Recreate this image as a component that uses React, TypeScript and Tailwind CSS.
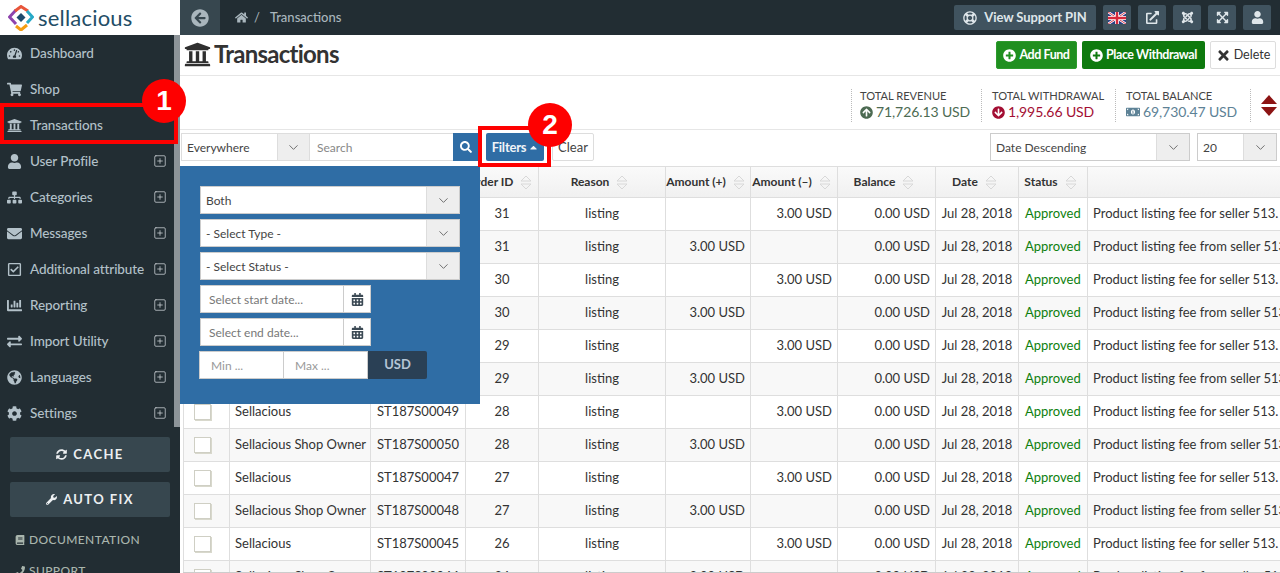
import type { ReactNode } from "react";
import { ChevronDown, SquarePlus } from "lucide-react";
import {
  FaArrowCircleDown,
  FaArrowCircleLeft,
  FaArrowCircleUp,
  FaBook,
  FaCalendarAlt,
  FaCaretUp,
  FaChartBar,
  FaCog,
  FaEnvelope,
  FaExchangeAlt,
  FaExpandArrowsAlt,
  FaExternalLinkAlt,
  FaGlobeAmericas,
  FaHome,
  FaJoomla,
  FaMoneyBillAlt,
  FaPhone,
  FaPlusCircle,
  FaRegCheckSquare,
  FaRegLifeRing,
  FaSearch,
  FaShoppingCart,
  FaSitemap,
  FaSyncAlt,
  FaTachometerAlt,
  FaTimes,
  FaUniversity,
  FaUser,
  FaWrench,
} from "react-icons/fa";

const navItems = [
  { label: "Dashboard", icon: <FaTachometerAlt />, plus: false },
  { label: "Shop", icon: <FaShoppingCart />, plus: false },
  { label: "Transactions", icon: <FaUniversity />, plus: false },
  { label: "User Profile", icon: <FaUser />, plus: true },
  { label: "Categories", icon: <FaSitemap />, plus: true },
  { label: "Messages", icon: <FaEnvelope />, plus: true },
  { label: "Additional attribute", icon: <FaRegCheckSquare />, plus: true },
  { label: "Reporting", icon: <FaChartBar />, plus: true },
  { label: "Import Utility", icon: <FaExchangeAlt />, plus: true },
  { label: "Languages", icon: <FaGlobeAmericas />, plus: true },
  { label: "Settings", icon: <FaCog />, plus: true },
];

const rows = [
  ["ST187S00061", "31", false],
  ["ST187S00062", "31", true],
  ["ST187S00059", "30", false],
  ["ST187S00060", "30", true],
  ["ST187S00057", "29", false],
  ["ST187S00058", "29", true],
  ["ST187S00049", "28", false],
  ["ST187S00050", "28", true],
  ["ST187S00047", "27", false],
  ["ST187S00048", "27", true],
  ["ST187S00045", "26", false],
  ["ST187S00044", "24", true],
] as const;

const columns = [
  { label: "", width: "w-[46px]" },
  { label: "Seller", width: "w-[141px]" },
  { label: "Txn ID", width: "w-[95px]" },
  { label: "Order ID", width: "w-[73px]" },
  { label: "Reason", width: "w-[127px]" },
  { label: "Amount (+)", width: "w-[85px]" },
  { label: "Amount (–)", width: "w-[87px]" },
  { label: "Balance", width: "w-[98px]" },
  { label: "Date", width: "w-[83px]" },
  { label: "Status", width: "w-[69px]" },
  { label: "", width: "w-[260px]" },
];

function Logo() {
  return (
    <div className="flex h-[35px] w-[180px] shrink-0 items-center bg-white pl-[8px]">
      <svg width="26" height="26" viewBox="0 0 26 26" fill="none" strokeWidth="3">
        <path d="M8 5 L1.5 12 L8 19" stroke="#8e44ad" />
        <path d="M7 6 L13 1.5 L20 6" stroke="#e8553a" />
        <path d="M19 6 L24.5 12 L19 18" stroke="#27a9c7" />
        <path d="M8 21 L13 25 L19 20" stroke="#f39c12" />
        <path d="M13 8 L17.500 12.500 L13 17 L8.500 12.500 Z" fill="#1d4a6d" stroke="none" />
      </svg>
      <span className="ml-[4px] text-[22px] leading-none font-normal tracking-[0.2px] text-[#234d66]">sellacious</span>
    </div>
  );
}

function Sidebar() {
  return (
    <aside className="relative flex w-[180px] shrink-0 flex-col overflow-hidden bg-[#222d33]">
      <Logo />
      <div className="absolute top-[35px] right-0 h-[392px] w-[6px] bg-[#8d9499]" />
      <nav className="flex flex-col">
        {navItems.map((item) => (
          <div key={item.label} className="flex h-[36px] items-center pr-[13px] pl-[7px] text-[#b3c1c9]">
            <span className="flex w-[23px] justify-start text-[15px]">{item.icon}</span>
            <span className="flex-1 text-[13.500px] font-medium tracking-[-0.1px] whitespace-nowrap">{item.label}</span>
            {item.plus && <SquarePlus size={14} strokeWidth={1.25} className="text-[#d5dbdf]" />}
          </div>
        ))}
      </nav>
      <div className="mt-[6px] flex flex-col gap-[10px] px-[10px]">
        <SideButton icon={<FaSyncAlt />} label="CACHE" />
        <SideButton icon={<FaWrench />} label="AUTO FIX" />
      </div>
      <div className="mt-[14px] flex items-center gap-[4px] pl-[15px] text-[12px] font-medium tracking-[0.4px] text-[#a9b5ad]">
        <FaBook className="text-[10px]" />
        DOCUMENTATION
      </div>
      <div className="mt-[13px] flex items-center gap-[4px] pl-[15px] text-[12px] font-medium tracking-[0.4px] text-[#a9b5ad]">
        <FaPhone className="text-[10px]" />
        SUPPORT
      </div>
    </aside>
  );
}

function SideButton({ icon, label }: { icon: ReactNode; label: string }) {
  return (
    <div className="flex h-[35px] items-center justify-center gap-[6px] rounded-[2px] bg-[#37474f] text-[13px] font-bold tracking-[1.4px] text-[#eceff1]">
      <span className="text-[11px]">{icon}</span>
      {label}
    </div>
  );
}

function Flag() {
  return (
    <svg width="18" height="12" viewBox="0 0 60 40">
      <rect width="60" height="40" fill="#2b3f86" />
      <path d="M0 0 L60 40 M60 0 L0 40" stroke="#fff" strokeWidth="8" />
      <path d="M0 0 L60 40 M60 0 L0 40" stroke="#d6283c" strokeWidth="3" />
      <path d="M30 0 V40 M0 20 H60" stroke="#fff" strokeWidth="13" />
      <path d="M30 0 V40 M0 20 H60" stroke="#d6283c" strokeWidth="8" />
    </svg>
  );
}

function TopButton({ children }: { children: ReactNode }) {
  return (
    <div className="flex h-[25px] w-[28px] items-center justify-center rounded-[2px] bg-[#40535f] text-[13px] text-[#dfe6ea]">
      {children}
    </div>
  );
}

function TopBar() {
  return (
    <header className="flex h-[35px] shrink-0 items-center bg-[#222d33]">
      <div className="flex h-full w-[40px] items-center justify-center bg-[#37474f] text-[18px] text-[#a9b6bd]">
        <FaArrowCircleLeft />
      </div>
      <FaHome className="ml-[15px] text-[13px] text-[#a9b6bd]" />
      <span className="ml-[6px] text-[13px] text-[#a9b6bd]">/</span>
      <span className="ml-[10px] text-[13px] font-medium text-[#a9b6bd]">Transactions</span>
      <div className="ml-auto flex items-center gap-[7px] pr-[9px]">
        <div className="flex h-[25px] w-[142px] items-center justify-center gap-[7px] rounded-[2px] bg-[#40535f] text-[13px] font-bold tracking-[-0.1px] text-[#dfe6ea]">
          <FaRegLifeRing className="text-[14px]" />
          View Support PIN
        </div>
        <TopButton>
          <Flag />
        </TopButton>
        <TopButton>
          <FaExternalLinkAlt />
        </TopButton>
        <TopButton>
          <FaJoomla />
        </TopButton>
        <TopButton>
          <FaExpandArrowsAlt />
        </TopButton>
        <TopButton>
          <FaUser />
        </TopButton>
      </div>
    </header>
  );
}

function TitleRow() {
  return (
    <div className="flex h-[41px] shrink-0 items-center border-b border-[#e6e6e6] px-[4px]">
      <FaUniversity className="-mt-[2px] text-[27px] text-[#2f2f2f]" />
      <h1 className="-mt-[2px] ml-[3px] text-[24px] font-bold tracking-[-0.75px] text-[#333]">Transactions</h1>
      <div className="ml-auto flex items-center gap-[5px]">
        <div className="flex h-[28px] w-[81px] items-center justify-center gap-[3px] rounded-[2px] border border-[#2d9b2d] bg-[#1f8f1f] pt-[1px] text-[12.500px] font-bold tracking-[-0.45px] text-white">
          <FaPlusCircle className="text-[13px]" />
          Add Fund
        </div>
        <div className="flex h-[28px] w-[123px] items-center justify-center gap-[3px] rounded-[2px] bg-[#0e7a0e] pt-[1px] text-[12.500px] font-bold tracking-[-0.45px] text-white">
          <FaPlusCircle className="text-[13px]" />
          Place Withdrawal
        </div>
        <div className="flex h-[28px] w-[66px] items-center justify-center gap-[3px] rounded-[2px] border border-[#ddd] bg-white pt-[1px] text-[12.500px] text-[#333]">
          <FaTimes className="text-[15px]" />
          Delete
        </div>
      </div>
    </div>
  );
}

function Stat({ label, value, icon, color, width, inset = "pl-[10px]" }: { label: string; value: string; icon: ReactNode; color: string; width: string; inset?: string }) {
  return (
    <div className={`${width} ${inset} h-[33px] border-l border-dotted border-[#bbb]`}>
      <div className="text-[11.100px] leading-[14px] text-[#444]">{label}</div>
      <div className={`flex items-center gap-[3px] text-[14px] leading-[18px] tracking-[-0.1px] ${color}`}>
        {icon}
        {value}
      </div>
    </div>
  );
}

function StatsRow() {
  return (
    <div className="flex h-[54px] shrink-0 items-center justify-end border-b border-[#e6e6e6] pt-[6px] pr-[3px]">
      <Stat width="w-[130px]" inset="pl-[8px]" label="TOTAL REVENUE" value="71,726.13 USD" color="text-[#4d6b53]" icon={<FaArrowCircleUp className="text-[13px]" />} />
      <Stat width="w-[134px]" label="TOTAL WITHDRAWAL" value="1,995.66 USD" color="text-[#a30e33]" icon={<FaArrowCircleDown className="text-[13px]" />} />
      <Stat width="w-[135px]" label="TOTAL BALANCE" value="69,730.47 USD" color="text-[#5d8296]" icon={<FaMoneyBillAlt className="text-[14px]" />} />
      <div className="flex h-[33px] w-[27px] items-center justify-end border-l border-dotted border-[#bbb]">
        <svg width="16" height="21" viewBox="0 0 16 21" fill="#8c1414">
          <path d="M8 0 L16 9 H0 Z" />
          <path d="M0 12 H16 L8 21 Z" />
        </svg>
      </div>
    </div>
  );
}

function Select({ text, width, arrow = "w-[33px]", border = "border-[#ddd]" }: { text: string; width: string; arrow?: string; border?: string }) {
  return (
    <div className={`flex h-[28px] shrink-0 items-stretch border bg-white text-[12px] text-[#444] ${width} ${border}`}>
      <span className="flex flex-1 items-center overflow-hidden pt-[1px] pl-[5px] whitespace-nowrap">{text}</span>
      <span className={`flex items-center justify-center border-l border-[#ddd] bg-[#eee] text-[#666] ${arrow}`}>
        <ChevronDown size={15} strokeWidth={1.5} />
      </span>
    </div>
  );
}

function Toolbar() {
  return (
    <div className="flex h-[36px] shrink-0 items-start pt-[3px] pl-[1px]">
      <Select text="Everywhere" width="w-[129px]" arrow="w-[32px]" />
      <div className="flex h-[28px] w-[143px] items-center border-y border-[#ddd] bg-white pt-[1px] pl-[7px] text-[12px] text-[#888]">Search</div>
      <div className="flex h-[28px] w-[25px] items-center justify-center bg-[#2f6da5] text-[12px] text-white">
        <FaSearch />
      </div>
      <div className="ml-[8px] flex h-[28px] w-[58px] items-center justify-center gap-[2px] rounded-[2px] bg-[#2f6da5] pt-[1px] pl-[1px] text-[13px] font-bold tracking-[-0.2px] text-[#f0f4f8]">
        Filters
        <FaCaretUp className="text-[11px]" />
      </div>
      <div className="ml-[8px] flex h-[28px] w-[42px] items-center justify-center rounded-[2px] border border-[#ddd] bg-white pt-[1px] text-[13px] text-[#444]">Clear</div>
      <div className="ml-auto flex gap-[7px] pr-[3px]">
        <Select text="Date Descending" width="w-[200px]" border="border-[#ccc]" />
        <Select text="20" width="w-[80px]" border="border-[#ccc]" />
      </div>
    </div>
  );
}

function SortArrows() {
  return (
    <svg width="12" height="15" viewBox="0 0 12 15" fill="none" stroke="#d8d8d8" className="mr-[5px] ml-[7px] inline-block align-middle">
      <path d="M1 6 L6 1 L11 6 Z" />
      <path d="M1 9 L6 14 L11 9 Z" />
    </svg>
  );
}

function TransactionsTable() {
  return (
    <div className="ml-[3px] min-h-0 flex-1 overflow-hidden border-b border-[#ccc]">
      <table className="w-[1164px] table-fixed border-collapse text-[13px] text-[#333]">
        <colgroup>
          {columns.map((col, i) => (
            <col key={i} className={col.width} />
          ))}
        </colgroup>
        <thead>
          <tr className="h-[31px] bg-gradient-to-b from-[#fafafa] to-[#f0f0f0]">
            {columns.map((col, i) => (
              <th key={i} className="border border-[#dedede] px-0 text-center text-[12px] font-bold whitespace-nowrap text-[#333]">
                {col.label}
                {col.label && <SortArrows />}
              </th>
            ))}
          </tr>
        </thead>
        <tbody>
          {rows.map(([txn, order, fromSeller]) => (
            <tr key={txn} className={`h-[33px] ${fromSeller ? "bg-[#f8f8f8]" : "bg-white"}`}>
              <td className="border border-[#dedede] pl-[10px]">
                <div className="h-[16px] w-[17px] border border-[#cfcfc4] bg-white shadow-[1px_1px_0_#d8d8cc]" />
              </td>
              <td className="border border-[#dedede] pl-[5px] whitespace-nowrap">
                {fromSeller ? "Sellacious Shop Owner" : "Sellacious"}
              </td>
              <td className="border border-[#dedede] text-center whitespace-nowrap">{txn}</td>
              <td className="border border-[#dedede] text-center">{order}</td>
              <td className="border border-[#dedede] text-center">listing</td>
              <td className="border border-[#dedede] pr-[5px] text-right whitespace-nowrap">{fromSeller ? "3.00 USD" : ""}</td>
              <td className="border border-[#dedede] pr-[5px] text-right whitespace-nowrap">{fromSeller ? "" : "3.00 USD"}</td>
              <td className="border border-[#dedede] pr-[5px] text-right whitespace-nowrap">0.00 USD</td>
              <td className="border border-[#dedede] text-center whitespace-nowrap">Jul 28, 2018</td>
              <td className="border border-[#dedede] pl-[6px] whitespace-nowrap text-[#0e7f0e]">Approved</td>
              <td className="overflow-hidden border border-[#dedede] pl-[5px] whitespace-nowrap">
                {fromSeller ? "Product listing fee from seller 513." : "Product listing fee for seller 513."}
              </td>
            </tr>
          ))}
        </tbody>
      </table>
    </div>
  );
}

function DateInput({ placeholder }: { placeholder: string }) {
  return (
    <div className="flex h-[28px] w-[171px] items-stretch border border-[#ccc] bg-white text-[12px] text-[#777]">
      <span className="flex flex-1 items-center pt-[1px] pl-[8px]">{placeholder}</span>
      <span className="flex w-[27px] items-center justify-center border-l border-[#ccc] text-[13px] text-[#3c4a55]">
        <FaCalendarAlt />
      </span>
    </div>
  );
}

function FilterPanel() {
  return (
    <div className="absolute top-[166px] left-0 flex h-[238px] w-[300px] flex-col gap-[5px] bg-[#2f6da5] pt-[20px] pl-[20px]">
      <Select text="Both" width="w-[260px]" border="border-[#ccc]" />
      <Select text="- Select Type -" width="w-[260px]" border="border-[#ccc]" />
      <Select text="- Select Status -" width="w-[260px]" border="border-[#ccc]" />
      <DateInput placeholder="Select start date..." />
      <DateInput placeholder="Select end date..." />
      <div className="-ml-[1px] flex h-[28px] text-[12px] text-[#999]">
        <span className="flex w-[85px] items-center border border-[#ccc] bg-white pt-[1px] pl-[11px]">Min ...</span>
        <span className="flex w-[84px] items-center border-y border-r border-[#ccc] bg-white pt-[1px] pl-[11px]">Max ...</span>
        <span className="flex w-[59px] items-center justify-center rounded-r-[2px] bg-[#2a4055] text-[13px] font-bold text-[#b5c5d6]">USD</span>
      </div>
    </div>
  );
}

function Callout({ number, className }: { number: string; className: string }) {
  return (
    <div className={`absolute flex h-[44px] w-[44px] items-center justify-center rounded-full bg-[#fe0000] font-['Liberation_Sans'] text-[28px] font-bold text-white ${className}`}>
      {number}
    </div>
  );
}

export default function App() {
  return (
    <div className="relative flex h-[573px] w-[1280px] overflow-hidden bg-white font-['Lato',sans-serif]">
      <Sidebar />
      <div className="relative flex min-w-0 flex-1 flex-col">
        <TopBar />
        <TitleRow />
        <StatsRow />
        <Toolbar />
        <TransactionsTable />
        <FilterPanel />
      </div>
      {/* tutorial markers drawn over the screen */}
      <div className="absolute top-[103px] left-0 h-[41px] w-[178px] border-[4px] border-[#fe0000]" />
      <div className="absolute top-[126px] left-[478px] h-[41px] w-[73px] border-[4px] border-[#fe0000]" />
      <Callout number="1" className="top-[79px] left-[142px]" />
      <Callout number="2" className="top-[103px] left-[528px]" />
    </div>
  );
}
